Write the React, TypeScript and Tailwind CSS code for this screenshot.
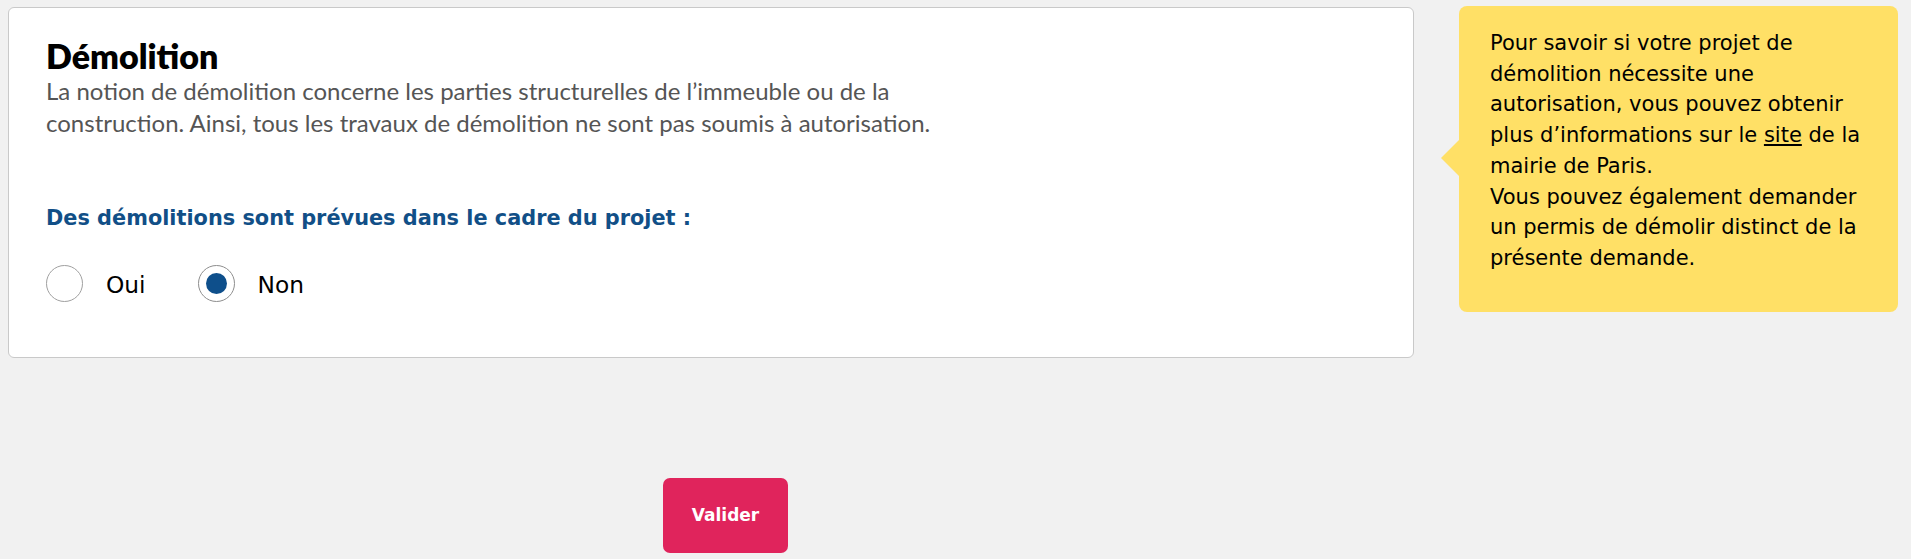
import React from "react";

export default function App() {
  return (
    <div className="flex min-h-[559px] w-[1911px] flex-col bg-[#f1f1f1]">
      <div className="flex items-start pt-[6px]">
        <div className="ml-2 mt-px h-[351px] w-[1406px] rounded-[6px] border border-[#c9c9c9] bg-white pl-[37px] pt-[28px]">
          <h1 className="font-['Lato',sans-serif] text-[34px] font-extrabold leading-[40px] text-black">
            Démolition
          </h1>
          <p className="-mt-[1px] whitespace-nowrap font-['Lato',sans-serif] text-[24px] leading-[32px] text-[#555555]">
            La notion de démolition concerne les parties structurelles de l’immeuble ou de la
            <br />
            construction. Ainsi, tous les travaux de démolition ne sont pas soumis à autorisation.
          </p>
          <p className="mt-[65px] font-['DejaVu_Sans',sans-serif] text-[20.85px] font-bold leading-[28px] text-[#114f87]">
            Des démolitions sont prévues dans le cadre du projet :
          </p>
          <div className="mt-[33px] flex items-center font-['DejaVu_Sans',sans-serif] text-[23.3px] leading-[28px] text-black">
            <label className="flex items-center gap-[23px]">
              <span className="block h-[37px] w-[37px] rounded-full border border-[#a0a0a0] bg-white" />
              <span className="mt-[3px]">Oui</span>
            </label>
            <label className="ml-[52px] flex items-center gap-[23px]">
              <span className="flex h-[37px] w-[37px] items-center justify-center rounded-full border border-[#8e8e8e] bg-white">
                <span className="block h-[21px] w-[21px] rounded-full bg-[#0e4f8b]" />
              </span>
              <span className="mt-[3px]">Non</span>
            </label>
          </div>
        </div>
        <div className="relative ml-[45px] h-[306px] w-[439px] rounded-[8px] bg-[#ffe066] pl-[31px] pt-[22px]">
          <span className="absolute left-[-18px] top-[134px] block h-0 w-0 border-y-[18px] border-r-[18px] border-y-transparent border-r-[#ffe066]" />
          <p className="whitespace-nowrap font-['DejaVu_Sans',sans-serif] text-[21px] leading-[30.7px] text-black">
            Pour savoir si votre projet de
            <br />
            démolition nécessite une
            <br />
            autorisation, vous pouvez obtenir
            <br />
            plus d’informations sur le <span className="underline underline-offset-2">site</span> de la
            <br />
            mairie de Paris.
            <br />
            Vous pouvez également demander
            <br />
            un permis de démolir distinct de la
            <br />
            présente demande.
          </p>
        </div>
      </div>
      <div className="mt-[120px] flex w-[1451px] justify-center">
        <button className="h-[75px] w-[125px] rounded-[7px] bg-[#e0245c] font-['DejaVu_Sans',sans-serif] text-[17px] font-bold text-white">
          Valider
        </button>
      </div>
    </div>
  );
}
